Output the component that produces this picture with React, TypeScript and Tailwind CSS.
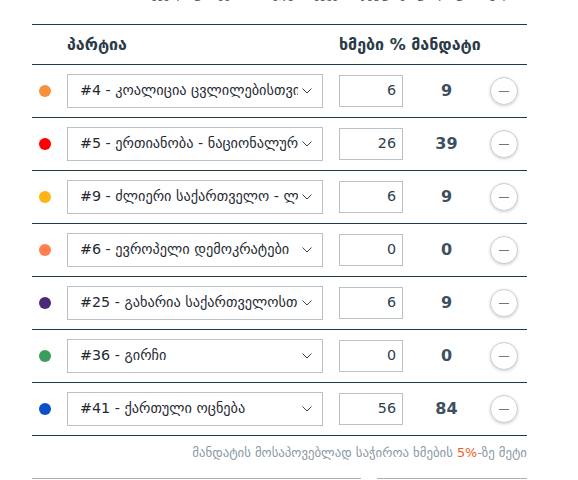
import React from "react";

const parties = [
  { color: "#f7923a", name: "#4 - კოალიცია ცვლილებისთვის", pct: "6", seats: "9" },
  { color: "#ff0000", name: "#5 - ერთიანობა - ნაციონალური მოძრაობა", pct: "26", seats: "39" },
  { color: "#fdb515", name: "#9 - ძლიერი საქართველო - ლელო", pct: "6", seats: "9" },
  { color: "#ff7f50", name: "#6 - ევროპელი დემოკრატები", pct: "0", seats: "0" },
  { color: "#4a2a78", name: "#25 - გახარია საქართველოსთვის", pct: "6", seats: "9" },
  { color: "#3a9d5d", name: "#36 - გირჩი", pct: "0", seats: "0" },
  { color: "#0d4fc8", name: "#41 - ქართული ოცნება", pct: "56", seats: "84" },
];

function Chevron() {
  return (
    <svg width="10" height="6" viewBox="0 0 10 6" className="shrink-0 ml-[4px]">
      <path d="M0.5 0.5 L5 5 L9.5 0.5" fill="none" stroke="#3a4650" strokeWidth="1" />
    </svg>
  );
}

export default function App() {
  return (
    <div className="w-[578px] h-[480px] overflow-hidden bg-white font-['DejaVu_Sans',sans-serif]">
      <div className="ml-[32px] w-[495px]">
        <div className="h-[24px] overflow-hidden">
          <div className="-mt-[13px] text-right text-[12px] leading-[14px] text-[#3b5668] whitespace-nowrap pr-[3px]">
            ყველა ფრაქციის მიხედვით ქვეყნის ჯგუფი ყოფილი ფორმულით
          </div>
        </div>
        <div className="border-t border-[#1f3a48]">
          <div className="h-[40px] flex items-center border-b border-[#1f3a48] text-[16px] font-bold text-[#2a3b47]">
            <span className="pl-[35px] w-[307px]">პარტია</span>
            <span>ხმები % მანდატი</span>
          </div>
          {parties.map((p, i) => (
            <div key={i} className="h-[53px] flex items-center border-b border-[#1f3a48]">
              <div className="ml-[7px] w-[12px] h-[12px] rounded-full shrink-0" style={{ backgroundColor: p.color }} />
              <div className="ml-[16px] w-[256px] h-[34px] border border-[#b9c1c6] bg-white flex items-center pl-[12px] pr-[10px] shrink-0">
                <div className="flex-1 overflow-hidden whitespace-nowrap text-[14.3px] text-[#1f2a33]">{p.name}</div>
                <Chevron />
              </div>
              <div className="ml-[16px] w-[64px] h-[32px] border border-[#b9c1c6] flex items-center justify-end pr-[6px] text-[14.3px] text-[#2c3e4c] shrink-0">
                {p.pct}
              </div>
              <div className="w-[87px] text-center text-[16px] font-bold text-[#3d5060]">{p.seats}</div>
              <div className="w-[28px] h-[28px] rounded-full border border-[#c8d0d4] bg-white shadow-[0_1px_3px_rgba(0,0,0,0.18)] flex items-center justify-center shrink-0">
                <div className="w-[10px] h-px bg-[#6b7a85]" />
              </div>
            </div>
          ))}
          <div className="h-[42px] pt-[9px] text-right text-[12.8px] leading-[16px] text-[#8a9aa5] whitespace-nowrap">
            მანდატის მოსაპოვებლად საჭიროა ხმების <span className="text-[#f25a1d]">5%</span>-ზე მეტი
          </div>
          <div className="flex">
            <div className="w-[329px] h-[20px] border-t border-[#a7b0b5]" />
            <div className="ml-[16px] flex-1 h-[20px] border-t border-[#a7b0b5]" />
          </div>
        </div>
      </div>
    </div>
  );
}
